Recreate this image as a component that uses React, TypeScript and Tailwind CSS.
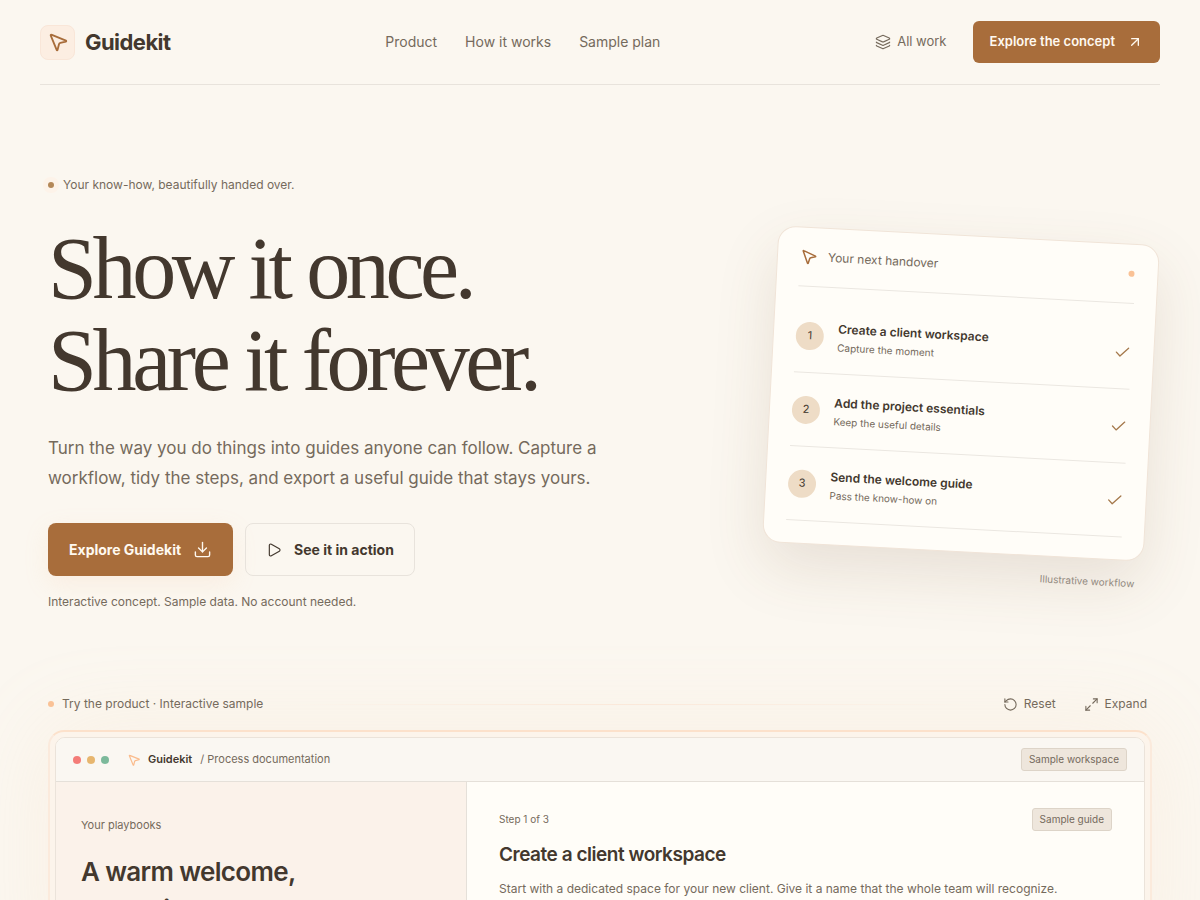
import {
  ArrowUpRight,
  Check,
  Download,
  Layers,
  Maximize2,
  MousePointer2,
  Play,
  RotateCcw,
} from 'lucide-react';

const navigation = [
  { name: 'Product', href: '#product' },
  { name: 'How it works', href: '#how-it-works' },
  { name: 'Sample plan', href: '#sample-plan' },
];

const steps = [
  { title: 'Create a client workspace', detail: 'Capture the moment' },
  { title: 'Add the project essentials', detail: 'Keep the useful details' },
  { title: 'Send the welcome guide', detail: 'Pass the know-how on' },
];

function Header() {
  return (
    <header className="mx-10 flex h-[85px] items-center justify-between border-b border-[#e8e3dc]">
      <a href="#" className="flex items-center gap-2.5">
        <span className="flex size-[35px] items-center justify-center rounded-lg border border-[#f9e6d8] bg-[#fceee2] text-[#a86d3b]">
          <MousePointer2 className="size-[22px]" />
        </span>
        <span className="text-[22px] font-bold tracking-tight text-[#43382e]">Guidekit</span>
      </a>

      <nav className="flex gap-7 text-sm">
        {navigation.map((item) => (
          <a key={item.name} href={item.href}>
            {item.name}
          </a>
        ))}
      </nav>

      <div className="flex items-center gap-[26px]">
        <a href="#work" className="flex items-center gap-1.5 text-[13px]">
          <Layers className="size-4" strokeWidth={1.75} />
          All work
        </a>
        <a
          href="#concept"
          className="flex h-[42px] items-center gap-3 rounded-md bg-[#a86d3b] px-[17px] text-[13px] font-semibold text-[#fff9f0]"
        >
          Explore the concept
          <ArrowUpRight className="size-4" />
        </a>
      </div>
    </header>
  );
}

function HandoverCard() {
  return (
    <figure className="relative w-[382px] shrink-0 rotate-3">
      <div className="rounded-[18px] border border-[#f0e4d8] bg-[#fffdf8] px-[22px] pb-[22px] shadow-[0_24px_60px_rgba(110,80,50,0.13)]">
        <div className="flex h-[59px] items-center border-b border-[#ebe7e1] text-xs">
          <MousePointer2 className="size-[18px] text-[#a86d3b]" />
          <span className="ml-2.5">Your next handover</span>
          <span className="mr-px ml-auto size-1.5 rounded-full bg-[#fac296]" />
        </div>
        <ol className="mt-3">
          {steps.map((step, i) => (
            <li key={step.title} className="flex h-[74px] items-center border-b border-[#ebe7e1]">
              <span className="flex size-7 items-center justify-center rounded-full bg-[#eedcc6] text-[11px] text-[#43382e]">
                {i + 1}
              </span>
              <span className="ml-[14px] flex flex-1 flex-col gap-1">
                <strong className="text-xs leading-4 font-semibold text-[#43382e]">{step.title}</strong>
                <span className="text-[10px] leading-3">{step.detail}</span>
              </span>
              <Check className="size-[18px] text-[#a5794c]" strokeWidth={1.75} />
            </li>
          ))}
        </ol>
      </div>
      <figcaption className="absolute top-full right-2 mt-[14px] text-[10px] leading-4 text-[#938a80]">
        Illustrative workflow
      </figcaption>
    </figure>
  );
}

function Hero() {
  return (
    <section className="mx-12 mt-[90px] flex items-center justify-between">
      <div className="w-[570px]">
        <p className="flex items-center gap-[9px] text-xs leading-5">
          <span className="size-1.5 rounded-full bg-[#b48858] shadow-[0_0_0_5px_#fdf3e9]" />
          Your know-how, beautifully handed over.
        </p>
        <h1 className="mt-7 font-['Liberation_Serif',serif] text-[88px] leading-[92px] tracking-tighter text-[#43382e]">
          Show it once.
          <br />
          Share it forever.
        </h1>
        <p className="mt-[26px] text-[17px] leading-[30px]">
          Turn the way you do things into guides anyone can follow. Capture a workflow, tidy the steps, and
          export a useful guide that stays yours.
        </p>
        <div className="mt-[30px] flex gap-3 text-sm font-bold">
          <button
            type="button"
            className="flex h-[53px] items-center gap-3 rounded-lg bg-[#a86d3b] px-[21px] text-[#fff9f0] shadow-[0_8px_24px_rgba(250,190,140,0.15)]"
          >
            Explore Guidekit
            <Download className="size-[19px]" strokeWidth={1.75} />
          </button>
          <button
            type="button"
            className="flex h-[53px] items-center gap-3 rounded-lg border border-[#e8e3dc] px-5 text-[#43382e]"
          >
            <Play className="size-4" strokeWidth={1.75} />
            See it in action
          </button>
        </div>
        <p className="mt-4 text-xs leading-5">Interactive concept. Sample data. No account needed.</p>
      </div>
      <HandoverCard />
    </section>
  );
}

function ProductDemo() {
  return (
    <section id="product" className="mx-12 mt-[82px]">
      <div className="flex h-5 items-center text-xs">
        <span className="mr-2 size-1.5 rounded-full bg-[#fac296]" />
        Try the product · Interactive sample
        <span className="mx-6 h-px flex-1 bg-linear-to-r from-transparent via-[#fbe8d9] to-transparent" />
        <button type="button" className="flex items-center gap-1.5">
          <RotateCcw className="size-[15px]" strokeWidth={1.75} />
          Reset
        </button>
        <button type="button" className="mr-[5px] ml-7 flex items-center gap-1.5">
          <Maximize2 className="size-[15px]" strokeWidth={1.75} />
          Expand
        </button>
      </div>

      <div className="mt-4 rounded-2xl border-2 border-x-[#fbeadc] border-t-[#fce1cb] border-b-[#fbeadc] bg-[#fcf4eb] p-[5px] shadow-[0_0_90px_rgba(240,200,160,0.15)]">
        <div className="overflow-hidden rounded-[10px] border border-[#ebe3da] bg-[#fffdf8]">
          <div className="flex h-[44px] items-center border-b border-[#e5e0d9] bg-[#faf7f2] px-[17px] text-[11px]">
            <span className="flex gap-1.5">
              <span className="size-2 rounded-full bg-[#f47c78]" />
              <span className="size-2 rounded-full bg-[#e7b66f]" />
              <span className="size-2 rounded-full bg-[#7cb99b]" />
            </span>
            <MousePointer2 className="ml-[18px] size-[14px] text-[#fabb8c]" />
            <strong className="ml-[7px] font-semibold text-[#43382e]">Guidekit</strong>
            <span className="ml-2">/ Process documentation</span>
            <span className="ml-auto rounded-[3px] border border-[#ddd4c8] bg-[#eee6dc] px-[7px] py-[3px] text-[10px] leading-[15px]">
              Sample workspace
            </span>
          </div>

          <div className="grid grid-cols-[411px_1fr]">
            <aside className="border-r border-[#e5e0d9] bg-[#fbf2ea] px-[25px] pt-[35px] pb-10">
              <p className="text-[11px] leading-4">Your playbooks</p>
              <h2 className="mt-5 text-[26px] leading-[38px] font-semibold tracking-tight text-[#43382e]">
                A warm welcome,
                <br />
                every time.
              </h2>
            </aside>
            <div className="px-8 pt-[26px] pb-10">
              <div className="flex items-center justify-between text-[10px]">
                <span>Step 1 of 3</span>
                <span className="rounded-[3px] border border-[#ddd4c8] bg-[#eee6dc] px-[7px] py-[3px] leading-[15px]">
                  Sample guide
                </span>
              </div>
              <h3 className="mt-3 text-[19px] leading-6 font-semibold tracking-tight text-[#43382e]">
                Create a client workspace
              </h3>
              <p className="mt-3 text-xs leading-5">
                Start with a dedicated space for your new client. Give it a name that the whole team will
                recognize.
              </p>
            </div>
          </div>
        </div>
      </div>
    </section>
  );
}

export default function App() {
  return (
    <div className="min-h-screen overflow-x-hidden bg-[#fbf7f0] font-['Inter',sans-serif] text-[#756a5c]">
      <Header />
      <Hero />
      <ProductDemo />
    </div>
  );
}
